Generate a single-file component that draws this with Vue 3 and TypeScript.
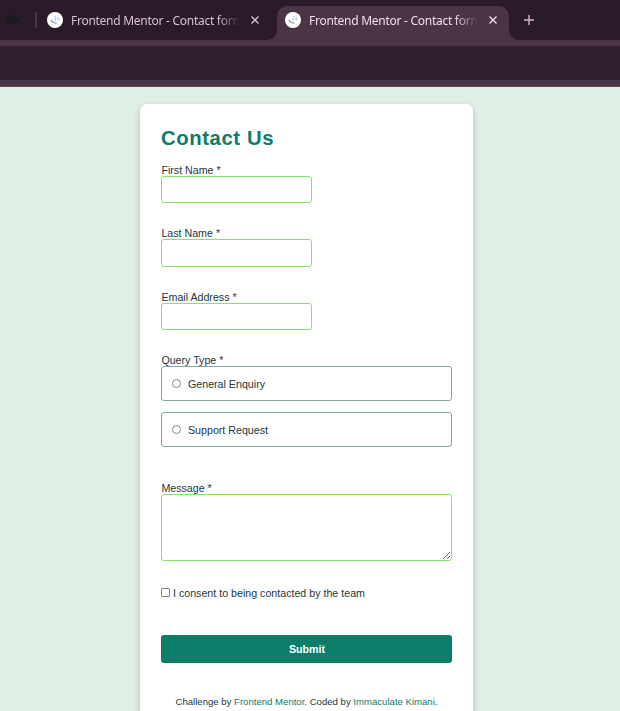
<script setup lang="ts">
import { ref } from 'vue'

interface Tab {
  title: string
  active: boolean
}

interface TextField {
  id: string
  label: string
  type: string
}

const tabs: Tab[] = [
  { title: 'Frontend Mentor - Contact form', active: false },
  { title: 'Frontend Mentor - Contact form', active: true },
]

const fields: TextField[] = [
  { id: 'first-name', label: 'First Name *', type: 'text' },
  { id: 'last-name', label: 'Last Name *', type: 'text' },
  { id: 'email', label: 'Email Address *', type: 'email' },
]

const queryTypes: string[] = ['General Enquiry', 'Support Request']

const values = ref<Record<string, string>>({})
const queryType = ref('')
const message = ref('')
const consent = ref(false)
</script>

<template>
  <div class="window">
    <header class="browser">
      <div class="tab-strip">
        <span class="pinned">alx</span>
        <span class="divider"></span>
        <div v-for="(tab, i) in tabs" :key="i" class="tab" :class="{ active: tab.active }">
          <svg class="favicon" viewBox="0 0 16 16" width="16" height="16">
            <circle cx="8" cy="8" r="8" fill="#fff" />
            <path d="M3.8 7.8C4.5 10 6.2 11.2 9.8 11.2" fill="none" stroke="#9a9fd0" stroke-width="1.2" />
            <path d="M8.5 4v5.2" fill="none" stroke="#a9dbe8" stroke-width="1.4" />
            <path d="M12.3 5.2L10.6 6.8l1.7 1.5" fill="none" stroke="#a5d6e4" stroke-width="1.1" />
          </svg>
          <span class="title">{{ tab.title }}</span>
          <svg class="close" viewBox="0 0 8 8" width="8" height="8">
            <path d="M.5.5l7 7M7.5.5l-7 7" fill="none" stroke="currentColor" stroke-width="1.4" />
          </svg>
        </div>
        <svg class="plus" viewBox="0 0 10 10" width="10" height="10">
          <path d="M5 0v10M0 5h10" fill="none" stroke="currentColor" stroke-width="1.4" />
        </svg>
      </div>
      <div class="toolbar"></div>
    </header>

    <main class="page">
      <form class="card" @submit.prevent>
        <h1>Contact Us</h1>

        <div v-for="field in fields" :key="field.id" class="field">
          <label :for="field.id">{{ field.label }}</label>
          <input :id="field.id" v-model="values[field.id]" class="text-input" :type="field.type" />
        </div>

        <div class="queries">
          <span class="label">Query Type *</span>
          <label v-for="query in queryTypes" :key="query" class="query">
            <input v-model="queryType" class="radio" type="radio" name="query" :value="query" />
            <span>{{ query }}</span>
          </label>
        </div>

        <div class="message">
          <label for="message">Message *</label>
          <textarea id="message" v-model="message"></textarea>
        </div>

        <label class="consent">
          <input v-model="consent" class="checkbox" type="checkbox" />
          <span>I consent to being contacted by the team</span>
        </label>

        <button type="submit">Submit</button>

        <p class="attribution">
          Challenge by <a href="#">Frontend Mentor</a>. Coded by <a href="#">Immaculate Kimani</a>.
        </p>
      </form>
    </main>
  </div>
</template>

<style>
body {
  margin: 0;
  overflow: hidden;
}
</style>

<style scoped>
* {
  box-sizing: border-box;
}

.window {
  display: flex;
  flex-direction: column;
  height: 711px;
  overflow: hidden;
  background: #dfefe5;
  font-family: 'Liberation Sans', Arial, sans-serif;
  color: #20383b;
}

.browser {
  flex: none;
  height: 87px;
  background: #4a3445;
  border-bottom: 1px solid #5a4655;
}

.tab-strip {
  display: flex;
  height: 40px;
  padding-left: 5px;
  background: #2b1b29;
  font-family: 'Noto Sans', sans-serif;
}

.pinned {
  width: 30px;
  padding-top: 11px;
  color: #151a1c;
  font: 900 13px/17px Lato, sans-serif;
  letter-spacing: -0.8px;
}

.divider {
  width: 2px;
  height: 16px;
  margin: 12px 2px 0 0;
  background: #4a3445;
}

.tab {
  position: relative;
  display: flex;
  width: 238px;
  height: 34px;
  margin-top: 6px;
  padding: 6px 0 0 8px;
  color: #d8bfd3;
}

.tab.active {
  width: 232px;
  border-radius: 10px 10px 0 0;
  background: #4a3445;
  color: #eddfea;
}

.tab.active::before,
.tab.active::after {
  content: '';
  position: absolute;
  bottom: 0;
  width: 10px;
  height: 10px;
}

.tab.active::before {
  right: 100%;
  background: radial-gradient(circle at 0 0, transparent 9.5px, #4a3445 10.5px);
}

.tab.active::after {
  left: 100%;
  background: radial-gradient(circle at 100% 0, transparent 9.5px, #4a3445 10.5px);
}

.favicon {
  flex: none;
}

.title {
  flex: none;
  width: 172px;
  margin-left: 8px;
  overflow: hidden;
  font-size: 12px;
  line-height: 17px;
  letter-spacing: -0.27px;
  white-space: nowrap;
  mask-image: linear-gradient(to right, #000 146px, transparent 169px);
}

.close {
  flex: none;
  margin: 4px 0 0 8px;
}

.plus {
  margin: 15px 0 0 15px;
  color: #d8b6d2;
}

.toolbar {
  height: 34px;
  margin-top: 6px;
  background: #33202f;
}

.page {
  display: flex;
  justify-content: center;
  padding: 17px 7px 0 0;
}

.card {
  width: 333px;
  height: 640px;
  padding: 20px 21px 0;
  border-radius: 7px;
  background: #fff;
  box-shadow: 0 3px 7px rgba(0, 0, 0, 0.2);
  font-size: 10.67px;
  line-height: 12px;
}

h1 {
  height: 28px;
  margin: 0 0 12px;
  color: #0c7d69;
  font-size: 20.3px;
  line-height: 28px;
  letter-spacing: 0.6px;
}

.field {
  display: flex;
  flex-direction: column;
  align-items: flex-start;
  height: 63.4px;
}

.field label,
.message label,
.queries .label {
  display: block;
  height: 12px;
  padding-left: 0.4px;
}

.text-input {
  width: 151px;
  height: 27.4px;
  border: 1px solid #86e36a;
  border-radius: 3px;
  background: #fff;
  outline: none;
}

.queries {
  height: 127.8px;
}

.query {
  display: flex;
  align-items: center;
  height: 35px;
  margin-bottom: 11px;
  padding-left: 10px;
  border: 1px solid #87a3a6;
  border-radius: 3px;
}

.radio,
.checkbox {
  width: 9px;
  height: 9px;
  border: 1px solid #858585;
  background: #fff;
  appearance: none;
}

.radio {
  margin: 0 7px 1px 0;
  border-radius: 50%;
}

.radio:checked,
.checkbox:checked {
  background: #0c7d69;
}

.checkbox {
  margin: 0 3px 1px 0;
  border-radius: 1px;
}

.message textarea {
  display: block;
  width: 291px;
  height: 67px;
  margin: 0;
  border: 1px solid #86e36a;
  border-radius: 3px;
  resize: vertical;
  outline: none;
}

.consent {
  display: flex;
  align-items: center;
  margin-top: 26px;
}

button {
  display: block;
  width: 100%;
  height: 28px;
  margin-top: 36px;
  padding: 0 0 0 1px;
  border: 0;
  border-radius: 3px;
  background: #0c7d69;
  color: #fff;
  font: 700 10.67px/12px 'Liberation Sans', Arial, sans-serif;
}

.attribution {
  margin: 33px 0 0;
  font-size: 9.58px;
  text-align: center;
}

.attribution a {
  color: #0c7d69;
  text-decoration: none;
}
</style>
